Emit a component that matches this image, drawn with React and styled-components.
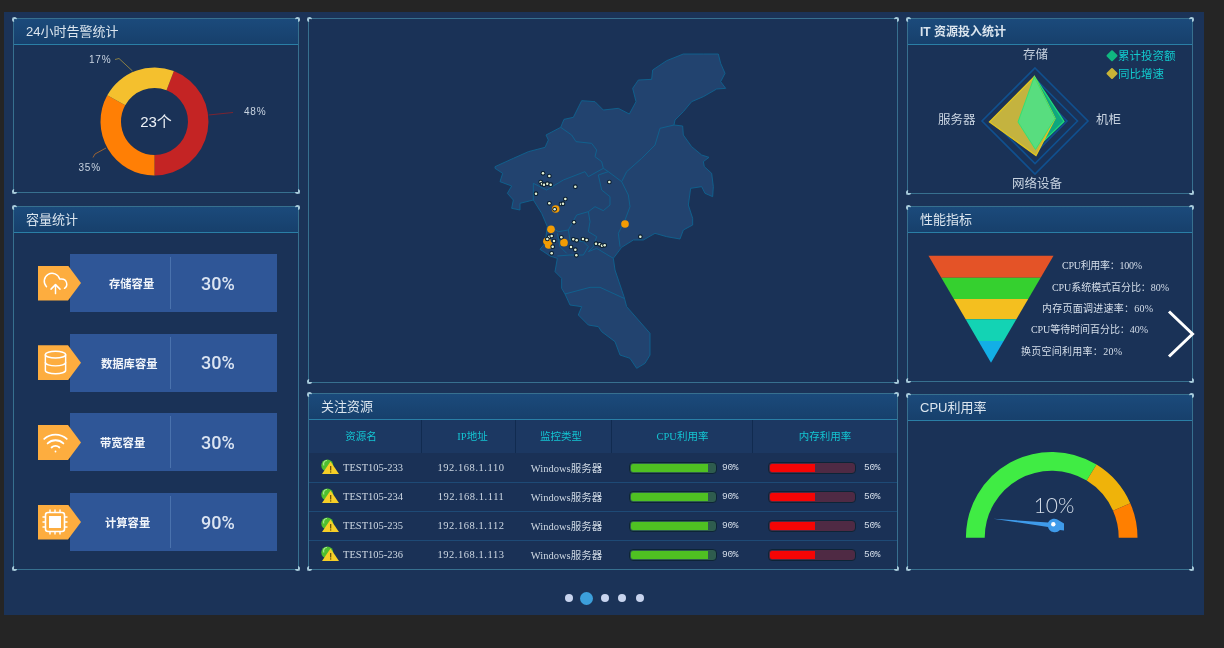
import React from "react";
import styled, { createGlobalStyle } from "styled-components";
import { CloudUpload, Database, Wifi } from "lucide-react";

const SANS = `"Liberation Sans", "Noto Sans CJK SC", sans-serif`;
const SERIF = `"Liberation Serif", "Noto Sans CJK SC", serif`;

const Global = createGlobalStyle`
  html, body { margin: 0; padding: 0; background: #252525; }
  body { font-family: ${SANS}; width: 1224px; height: 648px; overflow: hidden; }
  * { box-sizing: border-box; }
`;

const Page = styled.div`
  width: 1224px;
  height: 648px;
  padding: 12px 20px 33px 4px;
  background: #252525;
`;
const Dashboard = styled.div`
  position: relative;
  width: 1200px;
  height: 603px;
  padding: 6px 0 0 9px;
  background: #1b3358;
  filter: blur(0.4px);
`;
const Columns = styled.div`
  display: grid;
  grid-template-columns: 286px 590px 286px;
  column-gap: 9px;
`;
const Column = styled.div`
  display: flex;
  flex-direction: column;
  gap: ${(p) => p.$gap}px;
`;
const Panel = styled.section`
  position: relative;
  height: ${(p) => p.$h}px;
  border: 1px solid #37708f;
  background: #1a3257;
`;
const Corner = styled.span`
  position: absolute;
  width: 5px;
  height: 5px;
  border-style: solid;
  border-color: #a9ccdc;
  border-width: ${(p) => (p.$v === "top" ? "2px" : "0")} ${(p) => (p.$h === "right" ? "2px" : "0")}
    ${(p) => (p.$v === "bottom" ? "2px" : "0")} ${(p) => (p.$h === "left" ? "2px" : "0")};
  ${(p) => p.$v}: -2px;
  ${(p) => p.$h}: -2px;
  border-radius: 3px;
`;
const PanelHead = styled.header`
  height: 26px;
  padding: 0 0 2px 12px;
  display: flex;
  align-items: center;
  font-size: ${(p) => (p.$bold ? 12 : 13)}px;
  color: #dbe5ee;
  background: linear-gradient(180deg, #1b4a7b 0%, #17406c 100%);
  border-bottom: 1px solid #2a7fa6;
  font-weight: ${(p) => (p.$bold ? 700 : 400)};
`;
const ChartSvg = styled.svg`
  display: block;
  width: 284px;
  height: ${(p) => p.$h}px;
`;
const ChartLabel = styled.text`
  font-family: ${SANS};
  font-size: ${(p) => p.$size || 10}px;
  fill: ${(p) => p.$color || "#c8d3e0"};
  text-anchor: ${(p) => p.$anchor || "start"};
  dominant-baseline: central;
  letter-spacing: ${(p) => p.$track || 0}px;
`;
const GaugeValue = styled.text`
  font-family: Lato, sans-serif;
  font-weight: 300;
  font-size: 21px;
  fill: #d5dde8;
  text-anchor: middle;
  dominant-baseline: central;
`;
const FunnelLabel = styled.text`
  font-family: ${SERIF};
  font-size: 10px;
  fill: #d5deea;
  dominant-baseline: central;
`;

const CapacityList = styled.div`
  padding: 21px 0 0 24px;
  display: flex;
  flex-direction: column;
  gap: 21.7px;
`;
const CapacityRow = styled.div`
  display: flex;
  align-items: center;
`;
const Tag = styled.div`
  position: relative;
  z-index: 1;
  width: 43px;
  height: 35px;
  margin-right: -11px;
  padding-left: 4px;
  display: flex;
  align-items: center;
  color: #fff;
  background: #fdad3f;
  clip-path: polygon(0 0, 30px 0, 43px 50%, 30px 100%, 0 100%);
`;
const CapacityBar = styled.div`
  width: 207px;
  height: 58px;
  padding: 3px 0;
  display: grid;
  grid-template-columns: 101px 1fr;
  background: #2f5697;
`;
const CapacityName = styled.div`
  display: flex;
  align-items: center;
  padding-left: ${(p) => p.$indent}px;
  font-size: 11.3px;
  font-weight: 700;
  color: #f2f5fa;
  white-space: nowrap;
  border-right: 1px solid #4a72ad;
`;
const CapacityValue = styled.div`
  display: flex;
  align-items: center;
  padding-left: 30px;
  font-family: Roboto, sans-serif;
  font-weight: 500;
  font-size: 18px;
  color: #dbe4f2;
`;

const MapWrap = styled.div`
  padding: 21px 0 0 4px;
  display: flex;
  justify-content: center;
`;
const MapSvg = styled.svg`
  display: block;
  width: 270px;
  height: 340px;
`;

const TableHead = styled.div`
  display: grid;
  grid-template-columns: 113px 94px 96px 141px 144px;
  height: 33px;
  background: #1c3862;
`;
const HeadCell = styled.div`
  display: flex;
  align-items: center;
  justify-content: center;
  padding: 0 ${(p) => Math.max(-p.$nudge, 0)}px 2px ${(p) => Math.max(p.$nudge, 0)}px;
  font-family: ${SERIF};
  font-size: 10.5px;
  color: #14c4d2;
  border-right: ${(p) => (p.$last ? "none" : "1px solid #112b50")};
`;
const TableRow = styled.div`
  display: grid;
  grid-template-columns: 113px 94px 96px 141px 144px;
  height: 29px;
  background: #1a3156;
  border-top: 1px solid ${(p) => (p.$first ? "transparent" : "#1e4a76")};
`;
const Cell = styled.div`
  display: flex;
  align-items: center;
  justify-content: ${(p) => (p.$center ? "center" : "flex-start")};
  padding: 0 0 2px ${(p) => p.$pad || 0}px;
  font-family: ${SERIF};
  font-size: 10.5px;
  letter-spacing: ${(p) => p.$track || 0}px;
  color: #cfd9e4;
  white-space: nowrap;
`;
const MeterCell = styled(Cell)`
  padding-bottom: 1px;
`;
const StatusIcon = styled.svg`
  flex: none;
  width: 19px;
  height: 16px;
  margin-right: 3px;
`;
const Track = styled.div`
  flex: none;
  width: 88px;
  height: 12px;
  margin-right: ${(p) => p.$gap}px;
  padding: 1px;
  border-radius: 4px;
  border: 1px solid #0d2436;
  background: ${(p) => p.$rest};
  overflow: hidden;
`;
const Fill = styled.div`
  height: 100%;
  border-radius: 2px 0 0 2px;
  background: ${(p) => p.$color};
`;
const Percent = styled.span`
  font-family: "Liberation Mono", monospace;
  font-size: 9.5px;
  letter-spacing: -0.3px;
  color: #d5deea;
`;

const NextArrow = styled.svg`
  position: absolute;
  left: 1163px;
  top: 298px;
  width: 28px;
  height: 48px;
`;
const Pager = styled.div`
  height: 45px;
  padding-top: 11px;
  padding-right: 9px;
  display: flex;
  align-items: center;
  justify-content: center;
  gap: 9.5px;
`;
const Dot = styled.span`
  width: ${(p) => (p.$active ? 13 : 8)}px;
  height: ${(p) => (p.$active ? 13 : 8)}px;
  margin: 0 ${(p) => (p.$active ? -2 : 0)}px;
  border-radius: 50%;
  background: ${(p) => (p.$active ? "#3c9fdb" : "#c8d4ee")};
`;

function Corners() {
  return (
    <>
      <Corner $v="top" $h="left" />
      <Corner $v="top" $h="right" />
      <Corner $v="bottom" $h="left" />
      <Corner $v="bottom" $h="right" />
    </>
  );
}

function arc(cx, cy, R, r, a0, a1) {
  const p = (rad, a) => {
    const t = ((a - 90) * Math.PI) / 180;
    return `${(cx + rad * Math.cos(t)).toFixed(2)} ${(cy + rad * Math.sin(t)).toFixed(2)}`;
  };
  const big = a1 - a0 > 180 ? 1 : 0;
  return `M${p(R, a0)}A${R} ${R} 0 ${big} 1 ${p(R, a1)}L${p(r, a1)}A${r} ${r} 0 ${big} 0 ${p(r, a0)}Z`;
}

function Donut() {
  const c = [154.5, 121.5];
  return (
    <ChartSvg $h={147} viewBox="14 45 284 147">
      <path d={arc(c[0], c[1], 54, 33.5, 21, 180)} fill="#c42424" />
      <path d={arc(c[0], c[1], 54, 33.5, 180, 299)} fill="#ff7f05" />
      <path d={arc(c[0], c[1], 54, 33.5, 299, 381)} fill="#f4c02e" />
      <polyline points="115,59.5 119,58.5 132.5,71" fill="none" stroke="#8a7f45" />
      <polyline points="208.5,115 233,112.5" fill="none" stroke="#7a2431" />
      <polyline points="106,148 95,154 93,157.5" fill="none" stroke="#9a6233" />
      <ChartLabel x={89} y={59} $track={0.8}>17%</ChartLabel>
      <ChartLabel x={244} y={111.5} $track={0.8}>48%</ChartLabel>
      <ChartLabel x={78.5} y={167.5} $track={0.8}>35%</ChartLabel>
      <ChartLabel x={156} y={121} $size={15} $anchor="middle" $color="#eef2f7">23个</ChartLabel>
    </ChartSvg>
  );
}

function ChipIcon() {
  return (
    <svg width="26" height="28" viewBox="0 0 26 28" fill="none" stroke="#fff">
      <rect x="3.5" y="4.5" width="19" height="19" rx="2.5" strokeWidth="1.6" />
      <rect x="7" y="8" width="12" height="12" fill="#fff" stroke="none" />
      <path d="M8 1.5v3M13 1.5v3M18 1.5v3M8 23.5v3M13 23.5v3M18 23.5v3M.5 9h3M.5 14h3M.5 19h3M22.5 9h3M22.5 14h3M22.5 19h3" strokeWidth="1.4" />
    </svg>
  );
}

const capacity = [
  { name: "存储容量", value: "30%", indent: 39, icon: <CloudUpload size={27} strokeWidth={1.3} /> },
  { name: "数据库容量", value: "30%", indent: 31, icon: <Database size={27} strokeWidth={1.3} /> },
  { name: "带宽容量", value: "30%", indent: 30, icon: <Wifi size={27} strokeWidth={1.6} /> },
  { name: "计算容量", value: "90%", indent: 35, icon: <ChipIcon /> },
];

const outline =
  "75,380 130,355 175,335 225,322 235,300 228,285 272,262 282,238 310,232 335,182 375,185 400,210 445,205 478,222 498,185 488,145 505,120 545,118 548,90 590,62 640,42 700,42 745,42 752,70 765,100 752,125 767,145 740,147 700,170 665,185 640,215 615,240 612,255 638,258 640,285 665,320 695,345 717,352 700,365 703,380 725,400 730,440 728,470 705,460 695,440 662,445 655,495 668,535 668,555 640,570 630,597 590,590 555,580 520,600 490,600 455,622 430,655 435,690 462,770 470,800 540,880 540,945 525,970 500,985 480,955 450,945 435,905 395,875 385,860 355,855 325,825 335,800 300,795 285,762 275,745 275,715 255,695 262,655 240,648 210,628 225,610 232,560 215,520 190,480 150,490 150,510 125,505 130,480 112,460 125,438 90,425 98,400 75,385";
const inner = [
  "272,262 305,285 318,305 365,310 380,330 375,350 395,365 400,385",
  "612,255 570,265 555,315 515,355 470,395 455,425 475,465 480,500 465,540 445,580 450,620",
  "190,430 230,450 280,420 345,395 355,410 400,385",
  "190,430 190,480",
  "400,385 415,395 385,405 395,450 420,470 420,495 400,512 375,500 355,515 320,525 295,570 265,575 240,560",
  "415,395 455,425",
  "355,515 360,545 355,575 380,590 370,620 355,635 380,625 430,655",
  "262,648 300,645 340,645 355,620 340,605 300,600 295,570",
  "285,762 360,742 390,742 462,775",
  "262,580 270,620 290,640",
];
const points = [
  [219,400],[238,408],[212,426],[216,432],[222,434],[232,431],[242,434],[198,461],[316,440],[418,426],
  [238,490],[286,477],[273,492],[279,491],[312,547],[238,590],[245,588],[232,597],[252,603],[274,592],
  [310,598],[320,601],[339,597],[350,600],[378,611],[389,613],[396,617],[404,616],[303,621],[316,629],
  [319,646],[245,640],[511,590],[248,620],
];
const hubs = [[257,507],[243,568],[231,604],[236,615],[282,608],[465,552]];

function MapChart() {
  return (
    <MapSvg viewBox="0 0 810 1020">
      <polygon points={outline} fill="#22436f" stroke="#0e6592" strokeWidth="2.6" strokeLinejoin="round" />
      {inner.map((d) => (
        <polyline key={d} points={d} fill="none" stroke="#0e6592" strokeWidth="2.6" strokeLinejoin="round" />
      ))}
      {hubs.map(([x, y]) => (
        <circle key={`${x}-${y}`} cx={x} cy={y} r="11.5" fill="#f39c04" />
      ))}
      {[...points, [254, 508]].map(([x, y]) => (
        <g key={`${x}-${y}`}>
          <circle cx={x} cy={y} r="7" fill="#0b1d2c" />
          <circle cx={x} cy={y} r="3.8" fill="#e6f3d8" />
        </g>
      ))}
    </MapSvg>
  );
}

const diamond = (cx, cy, r) => `${cx},${cy - r} ${cx + r},${cy} ${cx},${cy + r} ${cx - r},${cy}`;

function Radar() {
  return (
    <ChartSvg $h={147} viewBox="908 45 284 147">
      {[53, 42.5, 32].map((r) => (
        <polygon key={r} points={diamond(1035, 121, r)} fill="#1a3257" stroke="#10508f" strokeWidth="1.6" />
      ))}
      <polygon points="1034.5,76.5 1064,121.5 1034.5,150 1018,121.5" fill="#0fa77f" stroke="#1fdc7a" strokeWidth="1.3" />
      <polygon points="1034.3,76.7 989.5,122 1036,155.5 1055,118.5" fill="#c4b33f" stroke="#e3c61f" strokeWidth="1.3" />
      <polygon points="1034.3,76.7 1055,118.5 1035.5,149.5 1018,122" fill="#58dd7f" stroke="#36e071" strokeWidth="1" />
      <ChartLabel x={1035.5} y={55} $size={12.5} $anchor="middle">存储</ChartLabel>
      <ChartLabel x={938} y={119.5} $size={12.5}>服务器</ChartLabel>
      <ChartLabel x={1096} y={119.5} $size={12.5}>机柜</ChartLabel>
      <ChartLabel x={1012} y={184} $size={12.5}>网络设备</ChartLabel>
      <polygon points={diamond(1112, 55.7, 4.5)} fill="#10b881" stroke="#10b881" strokeWidth="2" strokeLinejoin="round" />
      <polygon points={diamond(1112, 73.5, 4.5)} fill="#c8b437" stroke="#c8b437" strokeWidth="2" strokeLinejoin="round" />
      <ChartLabel x={1118} y={55.5} $size={11.5} $color="#12c9cd">累计投资额</ChartLabel>
      <ChartLabel x={1118} y={73.5} $size={11.5} $color="#12c9cd">同比增速</ChartLabel>
    </ChartSvg>
  );
}

const bands = [
  [255.7, 277.7, "#e45327"],
  [277.7, 299, "#35d02f"],
  [299, 319.3, "#f4bf1f"],
  [319.3, 341, "#13d3b4"],
  [341, 362.7, "#13afe6"],
];
const funnelLabels = [
  ["CPU利用率：100%", 1062, 265, 80],
  ["CPU系统模式百分比：80%", 1052, 287, 117],
  ["内存页面调进速率：60%", 1042, 308, 111],
  ["CPU等待时间百分比：40%", 1031, 329.5, 117],
  ["换页空间利用率：20%", 1021, 351, 101],
];

function Funnel() {
  const half = (y) => (62.5 * (362.7 - y)) / 107;
  return (
    <ChartSvg $h={148} viewBox="908 233 284 148">
      {bands.map(([a, b, color]) => (
        <polygon
          key={color}
          fill={color}
          points={`${991 - half(a)},${a} ${991 + half(a)},${a} ${991 + half(b)},${b} ${991 - half(b)},${b}`}
        />
      ))}
      {funnelLabels.map(([t, x, y, len]) => (
        <FunnelLabel key={t} x={x} y={y} textLength={len}>{t}</FunnelLabel>
      ))}
    </ChartSvg>
  );
}

function Gauge() {
  const cx = 1051.7;
  const cy = 537.7;
  return (
    <ChartSvg $h={148} viewBox="908 421 284 148">
      <path d={arc(cx, cy, 85.8, 67, -90, 31.5)} fill="#40ec44" />
      <path d={arc(cx, cy, 85.8, 67, 31.5, 66.3)} fill="#efb30a" />
      <path d={arc(cx, cy, 85.8, 67, 66.3, 90)} fill="#ff7f00" />
      <GaugeValue x={1054} y={504}>10%</GaugeValue>
      <path d="M993.3 518.7L1048 522.6A7 7 0 0 1 1059 520.5L1064 523.5V530.5L1060 530A7 7 0 0 1 1048 527Z" fill="#3f9bea" />
      <circle cx="1053.3" cy="524.3" r="2.2" fill="#fff" />
    </ChartSvg>
  );
}

function Status() {
  return (
    <StatusIcon viewBox="0 0 19 16">
      <circle cx="6.3" cy="6.5" r="6" fill="#4fbf2f" />
      <path d="M3 6.5a3.3 3.3 0 0 1 3-5" fill="none" stroke="#a8e890" strokeWidth="1.2" />
      <polygon points="9.5,2.5 18,15 1,15" fill="#f6cf27" />
      <rect x="9" y="7" width="1.3" height="4.5" fill="#6b5510" />
      <rect x="9" y="12.3" width="1.3" height="1.3" fill="#6b5510" />
    </StatusIcon>
  );
}

const rows = [
  ["TEST105-233", "192.168.1.110"],
  ["TEST105-234", "192.168.1.111"],
  ["TEST105-235", "192.168.1.112"],
  ["TEST105-236", "192.168.1.113"],
];
const heads = [
  ["资源名", -8],
  ["IP地址", 8],
  ["监控类型", -5],
  ["CPU利用率", 1],
  ["内存利用率", 0],
];

export default function App() {
  return (
    <Page>
      <Global />
      <Dashboard>
        <Columns>
          <Column $gap={13}>
            <Panel $h={175}>
              <Corners />
              <PanelHead>24小时告警统计</PanelHead>
              <Donut />
            </Panel>
            <Panel $h={364}>
              <Corners />
              <PanelHead>容量统计</PanelHead>
              <CapacityList>
                {capacity.map((c) => (
                  <CapacityRow key={c.name}>
                    <Tag>{c.icon}</Tag>
                    <CapacityBar>
                      <CapacityName $indent={c.indent}>{c.name}</CapacityName>
                      <CapacityValue>{c.value}</CapacityValue>
                    </CapacityBar>
                  </CapacityRow>
                ))}
              </CapacityList>
            </Panel>
          </Column>
          <Column $gap={10}>
            <Panel $h={365}>
              <Corners />
              <MapWrap>
                <MapChart />
              </MapWrap>
            </Panel>
            <Panel $h={177}>
              <Corners />
              <PanelHead>关注资源</PanelHead>
              <TableHead>
                {heads.map(([h, nudge], i) => (
                  <HeadCell key={h} $nudge={nudge} $last={i === heads.length - 1}>{h}</HeadCell>
                ))}
              </TableHead>
              {rows.map(([name, ip], i) => (
                <TableRow key={name} $first={i === 0}>
                  <Cell $pad={12}><Status />{name}</Cell>
                  <Cell $center $pad={4} $track={0.55}>{ip}</Cell>
                  <Cell $center $pad={5}>Windows服务器</Cell>
                  <MeterCell $pad={17}>
                    <Track $gap={5} $rest="#2e5c4e"><Fill $color="#4fc122" style={{ width: "92%" }} /></Track>
                    <Percent>90%</Percent>
                  </MeterCell>
                  <MeterCell $pad={15}>
                    <Track $gap={8} $rest="#4f2a44"><Fill $color="#f50505" style={{ width: "53%" }} /></Track>
                    <Percent>50%</Percent>
                  </MeterCell>
                </TableRow>
              ))}
            </Panel>
          </Column>
          <Column $gap={12}>
            <Panel $h={176}>
              <Corners />
              <PanelHead $bold>IT 资源投入统计</PanelHead>
              <Radar />
            </Panel>
            <Panel $h={176}>
              <Corners />
              <PanelHead>性能指标</PanelHead>
              <Funnel />
            </Panel>
            <Panel $h={176}>
              <Corners />
              <PanelHead>CPU利用率</PanelHead>
              <Gauge />
            </Panel>
          </Column>
        </Columns>
        <Pager>
          <Dot />
          <Dot $active />
          <Dot />
          <Dot />
          <Dot />
        </Pager>
        <NextArrow viewBox="0 0 28 48">
          <polyline points="2,1.5 25.5,24 2,46.5" fill="none" stroke="#fff" strokeWidth="3" />
        </NextArrow>
      </Dashboard>
    </Page>
  );
}
